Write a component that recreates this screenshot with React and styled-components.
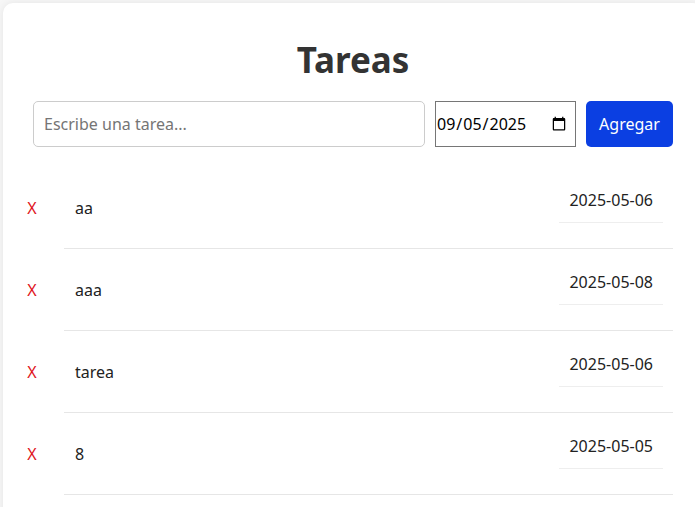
import styled, { createGlobalStyle } from "styled-components"

const tareas = [
    { id: 1, texto: "aa", fecha: "2025-05-06" },
    { id: 2, texto: "aaa", fecha: "2025-05-08" },
    { id: 3, texto: "tarea", fecha: "2025-05-06" },
    { id: 4, texto: "8", fecha: "2025-05-05" },
]

export default function App() {
    return (
        <>
            <Global />
            <Card>
                <Titulo>Tareas</Titulo>
                <Formulario onSubmit={(e) => e.preventDefault()}>
                    <CampoTexto type="text" placeholder="Escribe una tarea..." />
                    <CampoFecha type="date" defaultValue="2025-09-05" />
                    <Boton type="submit">Agregar</Boton>
                </Formulario>
                <Lista>
                    {tareas.map((t) => (
                        <Item key={t.id}>
                            <Borrar>X</Borrar>
                            <Contenido>
                                <span>{t.texto}</span>
                                <Fecha>{t.fecha}</Fecha>
                            </Contenido>
                        </Item>
                    ))}
                </Lista>
            </Card>
        </>
    )
}

const Global = createGlobalStyle`
    html, body {
        margin: 0;
        background: #f7f7f7;
        overflow: hidden;
    }
    body{
        padding: 3px;
        font-family: 'Noto Sans', 'Open Sans', sans-serif;
    }
`
const Card = styled.div`
    width: 640px;
    padding: 30px 30px 40px;
    background: #fff;
    border-radius: 10px;
    box-shadow: 0 0 8px rgba(0, 0, 0, 0.08);
`
const Titulo = styled.h1`
    margin: 5px 0 20px;
    text-align: center;
    font-size: 35px;
    line-height: 43px;
    font-weight: 700;
    color: #333;
`
const Formulario = styled.form`
    display: flex;
    gap: 10px;
    height: 46px;
`
const CampoTexto = styled.input`
    flex: 1;
    box-sizing: border-box;
    height: 46px;
    padding: 0 10px;
    border: 1px solid #ccc;
    border-radius: 5px;
    font-family: inherit;
    font-size: 16px;
    color: #222;
    &::placeholder{
        color: #757575;
    }
`
const CampoFecha = styled.input`
    box-sizing: border-box;
    width: 141px;
    height: 46px;
    padding: 0 6px 0 0;
    border: 1px solid #767676;
    border-radius: 0;
    font-family: inherit;
    font-size: 16px;
    color: #000;
`
const Boton = styled.button`
    width: 87px;
    height: 46px;
    border: none;
    border-radius: 5px;
    background: #0b3fe2;
    color: #fff;
    font-family: inherit;
    font-size: 16px;
    cursor: pointer;
`
const Lista = styled.ul`
    list-style: none;
    margin: 20px 0 0 -20px;
    padding: 0;
`
const Item = styled.li`
    display: flex;
    align-items: center;
`
const Borrar = styled.button`
    width: 38px;
    margin-right: 13px;
    padding: 0;
    border: none;
    background: transparent;
    color: #e0141b;
    font-family: inherit;
    font-size: 16px;
    cursor: pointer;
`
const Contenido = styled.div`
    flex: 1;
    display: flex;
    align-items: center;
    justify-content: space-between;
    height: 81px;
    padding: 0 10px 0 11px;
    border-bottom: 1px solid #e6e6e6;
    font-size: 16px;
    color: #222;
`
const Fecha = styled.span`
    margin-bottom: 14px;
    padding: 10px;
    line-height: 24px;
    border-bottom: 1px solid #eee;
    color: #222;
`
